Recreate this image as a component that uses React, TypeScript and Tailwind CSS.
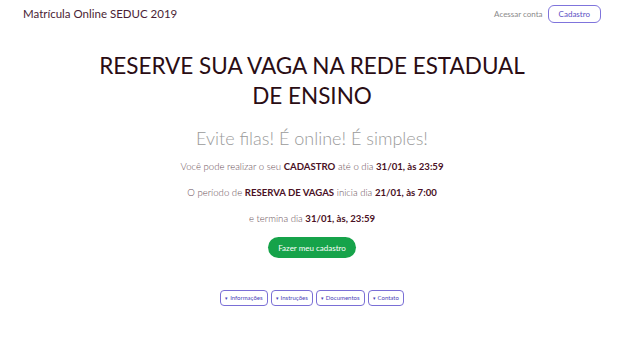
import React from "react";

const font = { fontFamily: "Lato, 'Noto Sans', sans-serif" };

function InfoButton({ label }: { label: string }) {
  return (
    <button className="flex items-center gap-[2px] h-[16px] px-[4px] border border-[#7a6fd6] rounded-[4px] text-[6px] text-[#4b44b8] bg-white leading-none">
      <span className="text-[5px]">▾</span>
      {label}
    </button>
  );
}

export default function App() {
  return (
    <div style={font} className="w-[640px] h-[349px] bg-white overflow-hidden">
      <nav className="flex items-center justify-between pl-[23px] pr-[39px] h-[28px]">
        <span className="text-[11.5px] text-[#4a1d35]">Matrícula Online SEDUC 2019</span>
        <div className="flex items-center gap-[5px]">
          <span className="text-[8px] text-[#8a8a8a]">Acessar conta</span>
          <button className="h-[18px] px-[10px] border border-[#7f74dc] rounded-[6px] text-[8px] text-[#5a50c4]">
            Cadastro
          </button>
        </div>
      </nav>

      <main className="flex flex-col items-center pr-[16px]">
        <h1 className="mt-[23px] w-[445px] text-center text-[22.5px] leading-[30px] text-[#2a0d14]">
          RESERVE SUA VAGA NA REDE ESTADUAL DE ENSINO
        </h1>
        <p className="mt-[15px] text-[18px] font-light text-[#9a9a9a] leading-[24px]">
          Evite filas! É online! É simples!
        </p>
        <div className="mt-[10px] flex flex-col items-center gap-[12px] text-[9.6px] leading-[14px] text-[#6a5058] font-light">
          <p>
            Você pode realizar o seu <b className="font-bold text-[#4a1024]">CADASTRO</b> até o dia{" "}
            <b className="font-bold text-[#4a1024]">31/01, às 23:59</b>
          </p>
          <p>
            O período de <b className="font-bold text-[#4a1024]">RESERVA DE VAGAS</b> inicia dia{" "}
            <b className="font-bold text-[#4a1024]">21/01, às 7:00</b>
          </p>
          <p>
            e termina dia <b className="font-bold text-[#4a1024]">31/01, às, 23:59</b>
          </p>
        </div>
        <button className="mt-[11px] h-[21px] px-[10px] rounded-full bg-[#16a34a] text-white text-[8px]">
          Fazer meu cadastro
        </button>
        <div className="mt-[32px] flex gap-[3px]">
          <InfoButton label="Informações" />
          <InfoButton label="Instruções" />
          <InfoButton label="Documentos" />
          <InfoButton label="Contato" />
        </div>
      </main>
    </div>
  );
}
